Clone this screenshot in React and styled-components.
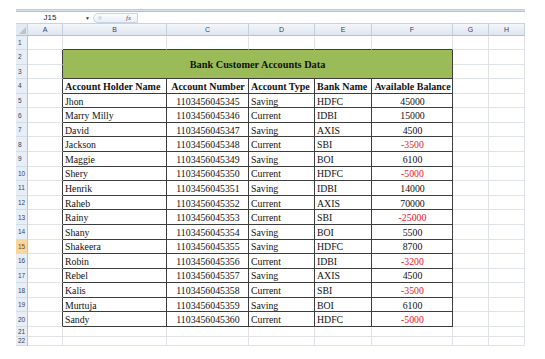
import React from 'react'
import styled, { createGlobalStyle } from 'styled-components'

const GlobalStyle = createGlobalStyle`
  html, body { margin: 0; padding: 0; background: #fff; }
  * { box-sizing: border-box; }
`

const columns = ['A', 'B', 'C', 'D', 'E', 'F', 'G', 'H']
const widths = [35, 104, 82, 66, 57, 81, 36, 36]

const headers = ['Account Holder Name', 'Account Number', 'Account Type', 'Bank Name', 'Available Balance']

const accounts = [
  ['Jhon', '1103456045345', 'Saving', 'HDFC', 45000],
  ['Marry Milly', '1103456045346', 'Current', 'IDBI', 15000],
  ['David', '1103456045347', 'Saving', 'AXIS', 4500],
  ['Jackson', '1103456045348', 'Current', 'SBI', -3500],
  ['Maggie', '1103456045349', 'Saving', 'BOI', 6100],
  ['Shery', '1103456045350', 'Current', 'HDFC', -5000],
  ['Henrik', '1103456045351', 'Saving', 'IDBI', 14000],
  ['Raheb', '1103456045352', 'Current', 'AXIS', 70000],
  ['Rainy', '1103456045353', 'Current', 'SBI', -25000],
  ['Shany', '1103456045354', 'Saving', 'BOI', 5500],
  ['Shakeera', '1103456045355', 'Saving', 'HDFC', 8700],
  ['Robin', '1103456045356', 'Current', 'IDBI', -3200],
  ['Rebel', '1103456045357', 'Saving', 'AXIS', 4500],
  ['Kalis', '1103456045358', 'Current', 'SBI', -3500],
  ['Murtuja', '1103456045359', 'Saving', 'BOI', 6100],
  ['Sandy', '1103456045360', 'Current', 'HDFC', -5000],
]

const rowHeights = ['14px', ...Array(19).fill('14.58px'), '10px', '9px']

function App() {
  const cells = []
  for (let r = 1; r <= 22; r++) {
    cells.push(
      <RowHead key={`h${r}`} $active={r === 15}>{r}</RowHead>
    )
    for (let c = 0; c < 8; c++) {
      const inTable = r >= 2 && r <= 20
      const inCols = c >= 1 && c <= 5
      // rows 2-3 of B:F are one merged title cell
      if ((r === 2 || r === 3) && inCols) {
        if (r === 2 && c === 1) {
          cells.push(<Title key="title">Bank Customer Accounts Data</Title>)
        }
        continue
      }
      let content = null
      let align = 'left'
      let bold = false
      let red = false
      if (r === 4 && inCols) {
        content = headers[c - 1]
        bold = true
        align = c === 2 || c === 5 ? 'center' : 'left'
      } else if (r >= 5 && r <= 20 && inCols) {
        const v = accounts[r - 5][c - 1]
        content = v
        if (c === 2 || c === 5) align = 'center'
        if (c === 5 && v < 0) red = true
      }
      cells.push(
        <Cell
          key={`${r}-${c}`}
          $darkRight={inTable && c <= 5}
          $darkBottom={r <= 20 && inCols}
          $align={align}
          $bold={bold}
          $red={red}
        >
          {content}
        </Cell>
      )
    }
  }

  return (
    <Page>
      <GlobalStyle />
      <TopStrip />
      <FormulaBar>
        <NameBox>J15</NameBox>
        <DropArrow>▼</DropArrow>
        <FxBox>
          <Knob />
          <Fx>fx</Fx>
        </FxBox>
        <FormulaInput />
      </FormulaBar>
      <Sheet $widths={widths} $rows={rowHeights}>
        <Corner>
          <svg width="9" height="9" viewBox="0 0 9 9">
            <polygon points="8,1 8,8 1,8" fill="#b9c3cf" />
          </svg>
        </Corner>
        {columns.map((l) => (
          <ColHead key={l}>{l}</ColHead>
        ))}
        {cells}
      </Sheet>
    </Page>
  )
}

export default App

const Page = styled.div`
  width: 509px;
  margin-left: 16px;
  padding-top: 9px;
  font-family: 'Liberation Serif', 'Times New Roman', serif;
`

const TopStrip = styled.div`
  height: 3px;
  border-top: 1px solid #b7cbe3;
  border-bottom: 1px solid #a9bfdb;
  background: #d7e3f1;
`

const FormulaBar = styled.div`
  display: flex;
  align-items: center;
  height: 12px;
  background: #fff;
  border-bottom: 1px solid #c5d2e2;
`

const NameBox = styled.div`
  width: 66px;
  font: 8px 'Liberation Sans', Arial, sans-serif;
  color: #222;
  text-align: center;
  padding-left: 2px;
`

const DropArrow = styled.div`
  width: 11px;
  font: 5px 'Liberation Sans', Arial, sans-serif;
  color: #333;
  text-align: center;
`

const FxBox = styled.div`
  position: relative;
  width: 45px;
  height: 10px;
  border: 1px solid #c6d3e3;
  border-radius: 6px 0 0 6px;
  background: linear-gradient(#fafcfe, #e9eff6);
  display: flex;
  align-items: center;
  justify-content: flex-end;
  padding-right: 6px;
`

const Knob = styled.div`
  position: absolute;
  left: 4px;
  top: 2px;
  width: 4px;
  height: 4px;
  border-radius: 50%;
  background: #d5dde8;
`

const Fx = styled.span`
  font: italic 7px 'Liberation Serif', serif;
  color: #555;
`

const FormulaInput = styled.div`
  flex: 1;
  height: 100%;
`

const Sheet = styled.div`
  display: grid;
  grid-template-columns: 12px ${(p) => p.$widths.map((w) => `${w}px`).join(' ')};
  grid-template-rows: 12px ${(p) => p.$rows.join(' ')};
  grid-auto-flow: row dense;
`

const Corner = styled.div`
  background: #e4eaf2;
  border-right: 1px solid #c5cfdc;
  border-bottom: 1px solid #b5c3d4;
  display: flex;
  align-items: flex-end;
  justify-content: flex-end;
`

const ColHead = styled.div`
  background: linear-gradient(#f3f6fb, #dfe6ef);
  border-right: 1px solid #c5cfdc;
  border-bottom: 1px solid #b5c3d4;
  font: 7px 'Liberation Sans', Arial, sans-serif;
  color: #34435a;
  display: flex;
  align-items: center;
  justify-content: center;
`

const RowHead = styled.div`
  background: ${(p) => (p.$active ? '#f9d79a' : '#e8eef6')};
  border-right: 1px solid #b5c3d4;
  border-bottom: 1px solid #d3dbe5;
  font: 6.5px 'Liberation Sans', Arial, sans-serif;
  color: ${(p) => (p.$active ? '#6b4a10' : '#34435a')};
  display: flex;
  align-items: center;
  padding-left: 2px;
`

const Cell = styled.div`
  border-right: 1px solid ${(p) => (p.$darkRight ? '#3d3d3d' : '#dfe3e8')};
  border-bottom: 1px solid ${(p) => (p.$darkBottom ? '#3d3d3d' : '#dfe3e8')};
  font-size: ${(p) => (p.$bold ? '10px' : '9.8px')};
  font-weight: ${(p) => (p.$bold ? 700 : 400)};
  color: ${(p) => (p.$red ? '#e8141b' : '#111')};
  display: flex;
  align-items: flex-end;
  justify-content: ${(p) => (p.$align === 'center' ? 'center' : 'flex-start')};
  padding: 0 1px 1px 2px;
  white-space: nowrap;
  overflow: hidden;
  line-height: 1;
`

const Title = styled.div`
  grid-column: 3 / span 5;
  grid-row: 3 / span 2;
  background: #9bbb59;
  border-right: 1px solid #3d3d3d;
  border-bottom: 1px solid #3d3d3d;
  display: flex;
  align-items: center;
  justify-content: center;
  font-size: 10.3px;
  font-weight: 700;
  color: #111;
`
